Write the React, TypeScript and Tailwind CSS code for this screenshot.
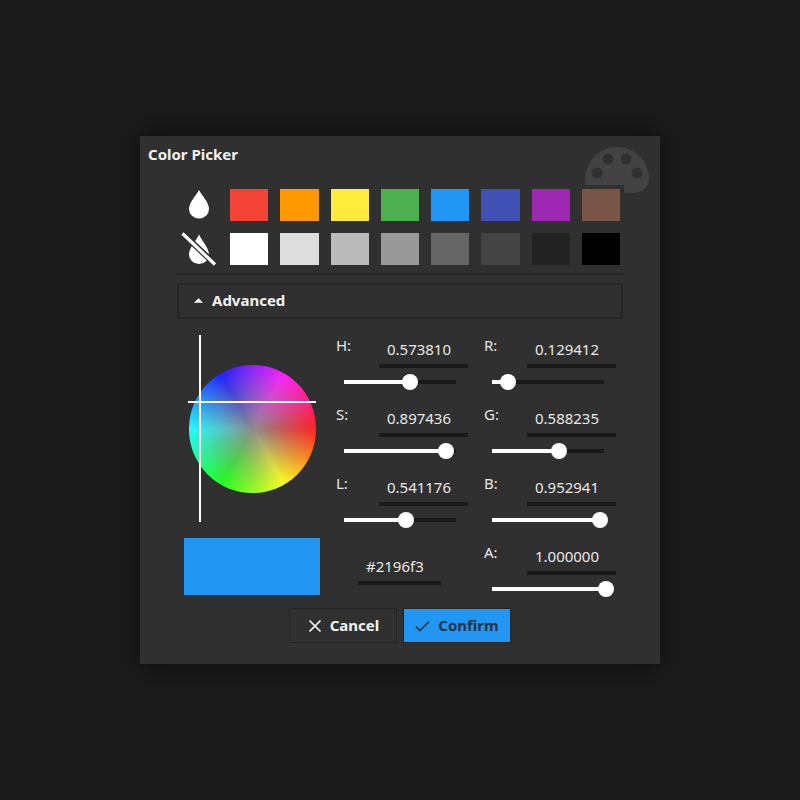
const topColors = ['#f44336', '#ff9800', '#ffeb3b', '#4caf50', '#2196f3', '#3f51b5', '#9c27b0', '#795548'];
const greyColors = ['#ffffff', '#dddddd', '#bbbbbb', '#999999', '#666666', '#444444', '#222222', '#000000'];

function Swatches({ colors }: { colors: string[] }) {
  return (
    <div className="grid grid-cols-8 gap-x-3 w-[390px] h-8">
      {colors.map((c) => (
        <div key={c} className="h-8" style={{ backgroundColor: c }} />
      ))}
    </div>
  );
}

function Slider({ value }: { value: number }) {
  const x = Math.floor(value * 112 + 2);
  return (
    <div className="relative ml-2 mt-[6px] w-[112px] h-4 flex items-center">
      <div className="w-full h-1 bg-[#1a1a1a]" />
      <div className="absolute left-0 top-[6px] h-1 bg-white" style={{ width: Math.min(x, 112) }} />
      <div className="absolute top-0 w-4 h-4 rounded-full bg-white" style={{ left: x - 8 }} />
    </div>
  );
}

function Field({ label, value }: { label: string; value: number }) {
  return (
    <div className="h-[69px]">
      <div className="flex justify-between h-[33px]">
        <span className="text-[15px] leading-5 text-[#e8e8e8]">{label}</span>
        <div className="w-[89px] h-[33px] pt-[2px] border-b-4 border-[#1a1a1a] text-[15px] leading-6 text-[#e8e8e8] text-center pr-[9px]">
          {value.toFixed(6)}
        </div>
      </div>
      <Slider value={value} />
    </div>
  );
}

export default function App() {
  return (
    <div className="min-h-screen bg-[#1b1b1b] flex items-center justify-center font-['Noto_Sans',sans-serif]">
      <div className="relative w-[520px] h-[528px] bg-[#303030] shadow-[0_0_28px_rgba(0,0,0,0.55)]">
        <svg className="absolute left-[445px] top-[11px]" width="64" height="46" viewBox="0 0 64 46">
          <path d="M0 38V32A32 32 0 0 1 64 32C64 40 57 46 47 46H39V38Z" fill="#434343" />
          <circle cx="23" cy="12" r="5.5" fill="#303030" />
          <circle cx="41" cy="12" r="5.5" fill="#303030" />
          <circle cx="12" cy="26" r="5.5" fill="#303030" />
          <circle cx="52" cy="26" r="5.5" fill="#303030" />
        </svg>

        <div className="relative h-[53px] pl-2 pt-2 text-[15px] leading-5 font-bold text-[#f2f2f2]">Color Picker</div>

        <div className="relative mx-9">
          <div className="flex items-center h-8">
            <div className="w-[54px]">
              <svg className="ml-[12px]" width="22" height="30" viewBox="0 0 22 30">
                <path d="M11 0C8 6 1 12 1 19A10 9.5 0 0 0 21 19C21 12 14 6 11 0Z" fill="#ffffff" />
              </svg>
            </div>
            <Swatches colors={topColors} />
          </div>
          <div className="flex items-center h-8 mt-3">
            <div className="w-[54px]">
              <svg className="ml-[5px]" width="36" height="34" viewBox="0 0 36 34">
                <path d="M18 1C15 8 8 14 8 21A10 9.5 0 0 0 28 21C28 14 21 8 18 1Z" fill="#ffffff" transform="translate(0 1.5)" />
                <path d="M2 2L34 32" stroke="#303030" strokeWidth="6" />
                <path d="M1.5 1.5L34 32.5" stroke="#ffffff" strokeWidth="3.2" />
              </svg>
            </div>
            <Swatches colors={greyColors} />
          </div>

          <div className="mt-2 h-[2px] bg-[#262626]" />

          <div className="mt-2 mx-px h-[36px] border-2 border-[#262626] flex items-center pb-[2px]">
            <svg className="ml-[15px]" width="9" height="5" viewBox="0 0 9 5">
              <path d="M4.5 0.5L8.5 4.5H0.5Z" fill="#ffffff" stroke="#ffffff" strokeWidth="0.5" strokeLinejoin="round" />
            </svg>
            <span className="ml-[9px] text-[15px] leading-5 font-bold text-[#f2f2f2]">Advanced</span>
          </div>

          <div className="flex mt-[16px]">
            <div className="w-[160px]">
              <div className="relative ml-3 w-[128px] h-[187px] flex items-center">
                <div className="relative ml-px w-[127px] h-[128px] rounded-full overflow-hidden bg-[conic-gradient(from_90deg,#ff2020,#ffff20,#20ff20,#20ffff,#2020ff,#ff20ff,#ff2020)]">
                  <div className="w-full h-full bg-[radial-gradient(closest-side,#8c8c8c,rgba(140,140,140,0.47)_50%,rgba(140,140,140,0))]" />
                </div>
                <div className="absolute left-[11px] top-0 w-[2px] h-[187px] bg-white" />
                <div className="absolute left-0 top-[66px] w-[128px] h-[2px] bg-white" />
              </div>
              <div className="ml-2 mt-4 w-[136px] h-[57px] bg-[#2196f3]" />
            </div>

            <div className="grid grid-cols-[132px_132px] gap-x-4">
              <Field label="H:" value={0.57381} />
              <Field label="R:" value={0.129412} />
              <Field label="S:" value={0.897436} />
              <Field label="G:" value={0.588235} />
              <Field label="L:" value={0.541176} />
              <Field label="B:" value={0.952941} />
              <div className="ml-[22px] mt-[10px] w-[83px] h-[33px] pt-[2px] pl-2 border-b-4 border-[#1a1a1a] text-[15px] leading-6 text-[#e8e8e8]">
                #2196f3
              </div>
              <Field label="A:" value={1} />
            </div>
          </div>
        </div>

        <div className="absolute left-0 right-0 top-[472px] flex justify-center gap-[6px]">
          <button className="w-[108px] h-[35px] flex items-center justify-center gap-2 border border-[#242424] bg-[#303030] text-[15px] font-bold text-[#f2f2f2]">
            <svg className="ml-px" width="14" height="14" viewBox="0 0 14 14">
              <path d="M1.5 1.5L12.5 12.5M12.5 1.5L1.5 12.5" stroke="#ffffff" strokeWidth="1.6" />
            </svg>
            Cancel
          </button>
          <button className="w-[108px] h-[35px] flex items-center justify-center gap-2 border border-[#242424] bg-[#2196f3] text-[15px] font-bold text-[#263340]">
            <svg width="15" height="12" viewBox="0 0 15 12">
              <path d="M1 6.5L5 10.5L14 1.5" stroke="#263340" strokeWidth="1.6" fill="none" />
            </svg>
            Confirm
          </button>
        </div>
      </div>
    </div>
  );
}
